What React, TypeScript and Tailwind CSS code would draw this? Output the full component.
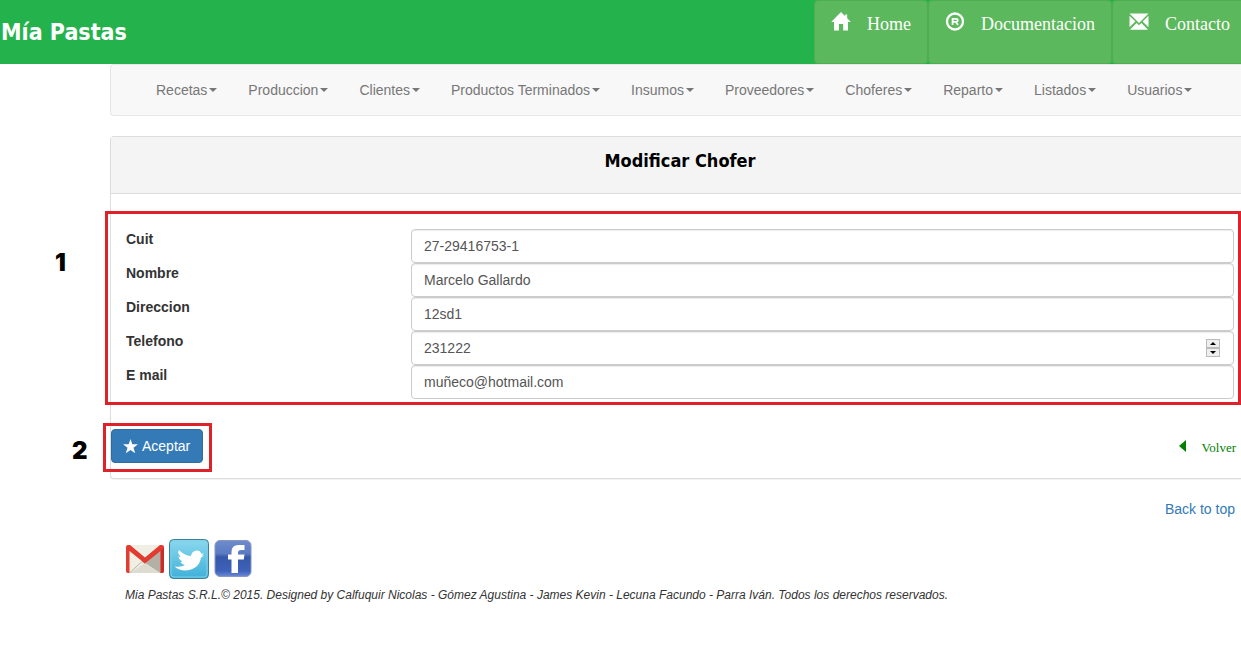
import React from "react";

const menus = [
  "Recetas",
  "Produccion",
  "Clientes",
  "Productos Terminados",
  "Insumos",
  "Proveedores",
  "Choferes",
  "Reparto",
  "Listados",
  "Usuarios",
];

const fields = [
  { id: "cuit", label: "Cuit", value: "27-29416753-1" },
  { id: "nombre", label: "Nombre", value: "Marcelo Gallardo" },
  { id: "direccion", label: "Direccion", value: "12sd1" },
  { id: "telefono", label: "Telefono", value: "231222", stepper: true },
  { id: "email", label: "E mail", value: "muñeco@hotmail.com" },
];

function HomeIcon() {
  return (
    <svg width="20" height="20" viewBox="0 0 20 20" fill="#fff" aria-hidden="true">
      <path d="M10 1 L14.2 5.3 V3.4 H16.2 V7.3 L19.8 11 H17 V19.4 H12.2 V13 H8 V19.4 H3 V11 H0.2 Z" />
    </svg>
  );
}

function RegisteredIcon() {
  return (
    <svg width="20" height="20" viewBox="0 0 20 20" fill="none" stroke="#fff" aria-hidden="true">
      <circle cx="10" cy="10.5" r="8" strokeWidth="2.3" />
      <path d="M7.6 14 V7.8 H11.2 Q12.8 7.8 12.8 9.3 Q12.8 10.8 11.2 10.8 H7.6 M10.8 10.8 L13 14" strokeWidth="1.8" />
    </svg>
  );
}

function EnvelopeIcon() {
  return (
    <svg width="20" height="20" viewBox="0 0 20 20" fill="#fff" aria-hidden="true">
      <path d="M0.5 2.5 H19.5 L10 12 Z M0.5 4.7 L6.4 10.6 L0.5 16.2 Z M19.5 4.7 L13.6 10.6 L19.5 16.2 Z M1 18.8 L7.6 12 L10 14.2 L12.4 12 L19 18.8 Z" />
    </svg>
  );
}

function GmailLogo() {
  return (
    <svg width="40" height="40" viewBox="0 0 40 40" aria-hidden="true">
      <path d="M4 6 H36 V34 H4 Z" fill="#f1eee4" />
      <path d="M20 24 L35 12 V34 Z" fill="#b3b1a6" />
      <path d="M20 24 L35 34 H5 Z" fill="#dedbd0" />
      <path d="M5 33.5 L17 22.5 L20 24.5" stroke="#b9b6a9" fill="none" />
      <path d="M1 8 Q1 6 3 6 H5 L20 18.5 L35 6 H37 Q39 6 39 8 V32 Q39 34 37 34 H35.5 V12 L20 24.5 L4.5 12 V34 H3 Q1 34 1 32 Z" fill="#e23c30" />
      <path d="M35.5 12 L39 9 V32 Q39 34 37 34 H35.5 Z" fill="#c62f27" />
    </svg>
  );
}

function TwitterLogo() {
  return (
    <svg width="40" height="40" viewBox="0 0 40 40" aria-hidden="true">
      <defs>
        <linearGradient id="tw" x1="0" y1="0" x2="0" y2="1">
          <stop offset="0" stopColor="#8bd8ee" />
          <stop offset="1" stopColor="#3fb0d8" />
        </linearGradient>
      </defs>
      <rect x="0.5" y="0.5" width="39" height="39" rx="4" fill="url(#tw)" stroke="#3b7f98" />
      <rect x="2" y="2" width="36" height="36" rx="3" fill="none" stroke="#7fcfe8" />
      <path d="M35 14.5 L32.2 14.8 Q31 11.2 27.2 11.6 Q22.8 12.4 22 17 Q15 16.5 10 11 Q8.6 13 9.6 15 L12 18 L9.5 17.6 Q10 21 13.5 22.6 L11.5 23 Q12.6 25.4 16 26 Q12 28.6 5.5 27.4 Q10 31.5 17 31.4 Q30 30.4 32 18.5 L35 16.8 L32.6 16.6 Z" fill="#fff" />
    </svg>
  );
}

function FacebookLogo() {
  return (
    <svg width="40" height="40" viewBox="0 0 40 40" aria-hidden="true">
      <defs>
        <linearGradient id="fb" x1="0" y1="0" x2="0" y2="1">
          <stop offset="0" stopColor="#6f8ccb" />
          <stop offset="0.36" stopColor="#5b7bc2" />
          <stop offset="0.46" stopColor="#3658a8" />
          <stop offset="0.85" stopColor="#3e62bb" />
          <stop offset="1" stopColor="#6d8bd4" />
        </linearGradient>
      </defs>
      <rect x="2" y="1.5" width="36" height="36" rx="5" fill="url(#fb)" stroke="#8797c4" />
      <path d="M18.5 34 V20.5 H15 V15.5 H18.5 V13 Q18.5 6 25.5 6 H31.5 V11 H28 Q25 11 25 13.5 V15.5 H31.5 L30.8 20.5 H25 V34 Z" fill="#fff" />
    </svg>
  );
}

const topLinks = [
  { label: "Home", icon: <HomeIcon /> },
  { label: "Documentacion", icon: <RegisteredIcon /> },
  { label: "Contacto", icon: <EnvelopeIcon /> },
];

export default function App() {
  return (
    <div className="overflow-x-hidden bg-white font-['Liberation_Sans',Arial,sans-serif] text-[14px] leading-5 text-[#333]">
      <header className="flex h-16 items-stretch justify-between bg-[#24b24d]">
        <a href="#" className="self-center pl-px font-['DejaVu_Sans_Condensed','DejaVu_Sans',sans-serif] text-[23px] leading-8 font-bold text-white">
          Mía Pastas
        </a>
        <nav className="flex">
          {topLinks.map(({ label, icon }) => (
            <a
              key={label}
              href="#"
              className="flex items-start gap-4 rounded border border-[#4cae4c] bg-[#5cb85c] px-4 pt-2.5 font-['Liberation_Serif',serif] text-[18px] leading-[26px] text-white last:rounded-r-none last:border-r-0 last:pr-[11px]"
            >
              {icon}
              <span>{label}</span>
            </a>
          ))}
        </nav>
      </header>

      <div className="pl-[110px]">
        <nav className="flex h-[52px] items-center gap-[31px] rounded-l border border-r-0 border-[#e7e7e7] bg-[#f8f8f8] pl-[45px]">
          {menus.map((menu) => (
            <a key={menu} href="#" className="flex items-center gap-0.5 whitespace-nowrap text-[#777]">
              {menu}
              <svg width="8" height="4" viewBox="0 0 8 4" fill="#777" aria-hidden="true">
                <path d="M0 0 H8 L4 4 Z" />
              </svg>
            </a>
          ))}
        </nav>

        <main className="mt-5 rounded-l border border-r-0 border-[#ddd] pb-[15px] shadow-[0_1px_1px_rgba(0,0,0,0.05)]">
          <div className="h-[57px] border-b border-[#ddd] bg-[#f4f4f4] pt-3 pl-2 text-center">
            <h1 className="font-['DejaVu_Sans_Condensed','DejaVu_Sans',sans-serif] text-[18px] leading-6 font-bold text-black">
              Modificar Chofer
            </h1>
          </div>

          <form>
            <div className="relative mt-[17px] pt-[18px] pr-[7px] pb-1.5 pl-[15px]">
              {fields.map((field) => (
                <div key={field.id} className="flex">
                  <label htmlFor={field.id} className="w-[285px] shrink-0 font-bold">
                    {field.label}
                  </label>
                  <div className="relative grow">
                    <input
                      id={field.id}
                      defaultValue={field.value}
                      className="block h-[34px] w-full rounded border border-[#ccc] bg-white px-3 text-[#555] shadow-[inset_0_1px_1px_rgba(0,0,0,0.075)]"
                    />
                    {field.stepper && (
                      <div className="absolute top-2 right-3.5 flex flex-col">
                        <button type="button" aria-label="Subir" className="flex h-[9px] w-[14px] items-center justify-center border border-[#bbb] bg-[#eee]">
                          <svg width="6" height="3" viewBox="0 0 6 3" aria-hidden="true">
                            <path d="M0 3 L3 0 L6 3 Z" />
                          </svg>
                        </button>
                        <button type="button" aria-label="Bajar" className="flex h-[9px] w-[14px] items-center justify-center border border-[#bbb] bg-[#eee]">
                          <svg width="6" height="3" viewBox="0 0 6 3" aria-hidden="true">
                            <path d="M0 0 L3 3 L6 0 Z" />
                          </svg>
                        </button>
                      </div>
                    )}
                  </div>
                </div>
              ))}
              <div className="pointer-events-none absolute inset-y-0 right-0 -left-1.5 border-3 border-[#dd2229]" />
              <span className="absolute top-9 -left-14 font-[Inter,'DejaVu_Sans',sans-serif] text-[24px] leading-8 font-black text-black">1</span>
            </div>

            <div className="mt-6 flex items-center justify-between pr-[5px]">
              <div className="relative">
                <button type="submit" className="flex h-[34px] items-center gap-1 rounded border border-[#2e6da4] bg-[#337ab7] pr-3 pl-[11px] text-white">
                  <svg width="15" height="15" viewBox="0 0 14 14" fill="#fff" aria-hidden="true">
                    <path d="M7 0 L8.7 5 H14 L9.8 8.2 L11.4 13.4 L7 10.3 L2.6 13.4 L4.2 8.2 L0 5 H5.3 Z" />
                  </svg>
                  Aceptar
                </button>
                <div className="pointer-events-none absolute -top-1.5 -right-[9px] -bottom-[9px] -left-2 border-3 border-[#dd2229]" />
                <span className="absolute top-1.5 -left-[39px] font-[Inter,'DejaVu_Sans',sans-serif] text-[24px] leading-8 font-black text-black">2</span>
              </div>
              <a href="#" className="flex items-center gap-4 font-['Liberation_Serif',serif] text-[13px] text-[#008000]">
                <svg width="7" height="12" viewBox="0 0 7 12" fill="#008000" aria-hidden="true">
                  <path d="M7 0 V12 L0 6 Z" />
                </svg>
                <span className="pt-1">Volver</span>
              </a>
            </div>
          </form>
        </main>

        <footer className="pt-5 pl-[15px]">
          <p className="pr-1.5 text-right">
            <a href="#" className="text-[#337ab7]">Back to top</a>
          </p>
          <div className="mt-5 flex gap-1">
            <a href="#" aria-label="Gmail"><GmailLogo /></a>
            <a href="#" aria-label="Twitter"><TwitterLogo /></a>
            <a href="#" aria-label="Facebook"><FacebookLogo /></a>
          </div>
          <p className="mt-1.5 text-[12px] italic">
            Mia Pastas S.R.L.© 2015. Designed by Calfuquir Nicolas - Gómez Agustina - James Kevin - Lecuna Facundo - Parra Iván. Todos los derechos reservados.
          </p>
        </footer>
      </div>
    </div>
  );
}
